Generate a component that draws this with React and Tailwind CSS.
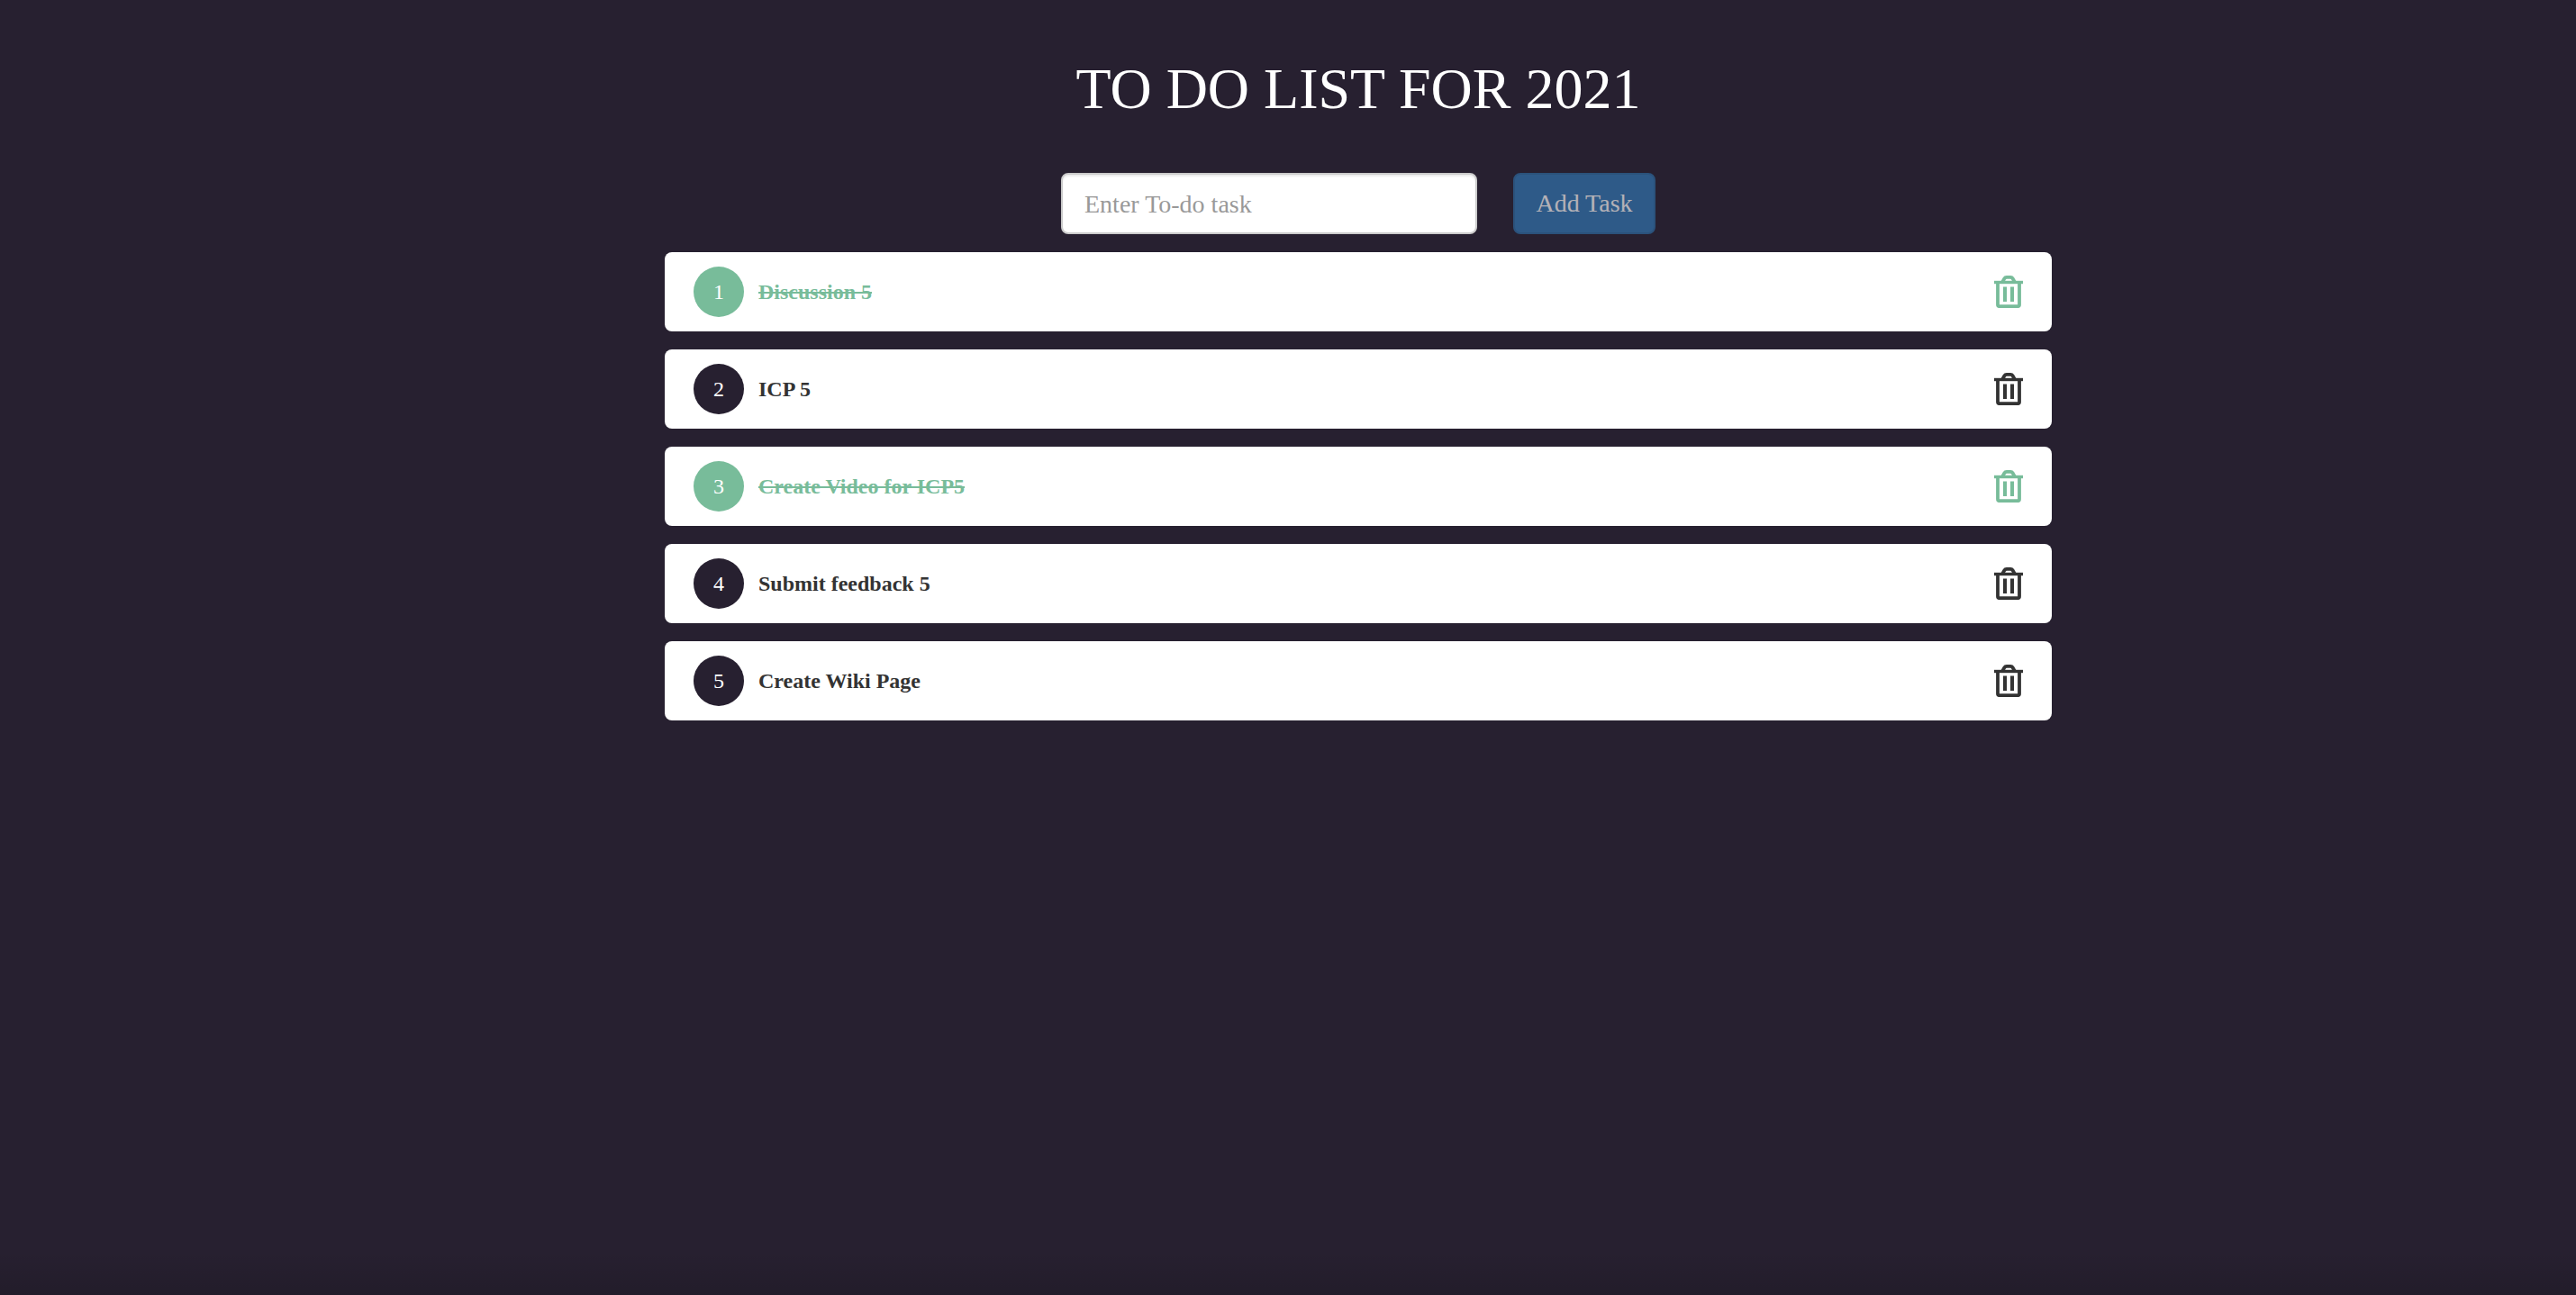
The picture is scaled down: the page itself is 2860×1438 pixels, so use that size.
import React, { useState } from "react";

const initialTasks = [
  { id: 1, title: "Discussion 5", done: true },
  { id: 2, title: "ICP 5", done: false },
  { id: 3, title: "Create Video for ICP5", done: true },
  { id: 4, title: "Submit feedback 5", done: false },
  { id: 5, title: "Create Wiki Page", done: false },
];

function TrashIcon() {
  return (
    <svg viewBox="0 0 32 36" className="h-9 w-8" fill="none" stroke="currentColor" aria-hidden="true">
      <path d="M0 7.5H32" strokeWidth="3.4" />
      <path d="M9 7.500L11.400 3.300Q12.200 1.900 13.800 1.900H18.200Q19.800 1.900 20.600 3.300L23 7.500" strokeWidth="3.800" />
      <path d="M4 8V32.200Q4 34.200 6 34.200H26Q28 34.200 28 32.200V8" strokeWidth="3.800" />
      <path d="M12 12.500V29M20 12.500V29" strokeWidth="4" />
    </svg>
  );
}

function TaskRow({ number, task, onToggle, onRemove }) {
  return (
    <li
      className={`flex items-center gap-4 rounded-lg bg-white px-8 py-4 ${
        task.done ? "text-[#78bc9a]" : "text-[#333333]"
      }`}
    >
      <span
        className={`flex size-14 shrink-0 items-center justify-center rounded-full text-2xl text-white ${
          task.done ? "bg-[#78bc9a]" : "bg-[#272030]"
        }`}
      >
        {number}
      </span>
      <button
        type="button"
        onClick={onToggle}
        className={`grow text-left text-2xl font-bold ${task.done ? "line-through" : ""}`}
      >
        {task.title}
      </button>
      <button type="button" aria-label={`Delete ${task.title}`} onClick={onRemove}>
        <TrashIcon />
      </button>
    </li>
  );
}

export default function App() {
  const [tasks, setTasks] = useState(initialTasks);
  const [text, setText] = useState("");

  const addTask = (event) => {
    event.preventDefault();
    if (!text.trim()) return;
    setTasks([...tasks, { id: Date.now(), title: text.trim(), done: false }]);
    setText("");
  };

  return (
    <main className="flex min-h-screen flex-col items-center bg-[#272030] bg-[linear-gradient(to_top,rgba(0,0,0,0.12),transparent_48px)] pl-[156px] font-['Liberation_Serif',serif]">
      <h1 className="pt-16 text-[64px] leading-[70px] text-white">TO DO LIST FOR 2021</h1>
      <form onSubmit={addTask} className="mt-[58px] flex gap-10">
        <input
          type="text"
          aria-label="To-do task"
          placeholder="Enter To-do task"
          value={text}
          onChange={(event) => setText(event.target.value)}
          className="h-[68px] w-[462px] rounded-lg border-2 border-[#cccccc] bg-white px-6 pt-0.5 text-[28px] text-[#555555] shadow-[inset_0_2px_2px_rgba(0,0,0,0.075)] placeholder:text-[#999999]"
        />
        <button
          type="submit"
          disabled={!text.trim()}
          className="h-[68px] w-[158px] rounded-lg border-2 border-[#2e6da4] bg-[#337ab7] text-[28px] text-white disabled:opacity-65"
        >
          Add Task
        </button>
      </form>
      <ul className="mt-5 flex w-full max-w-[1540px] flex-col gap-5">
        {tasks.map((task, index) => (
          <TaskRow
            key={task.id}
            number={index + 1}
            task={task}
            onToggle={() =>
              setTasks(tasks.map((t) => (t.id === task.id ? { ...t, done: !t.done } : t)))
            }
            onRemove={() => setTasks(tasks.filter((t) => t.id !== task.id))}
          />
        ))}
      </ul>
    </main>
  );
}
